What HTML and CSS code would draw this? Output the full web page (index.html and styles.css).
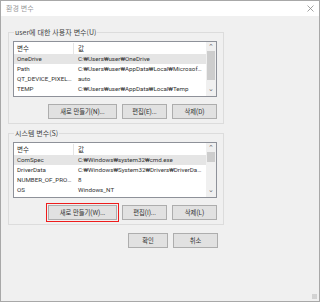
FILE: index.html
```html
<!doctype html>
<html lang="ko">
  <head>
    <meta charset="UTF-8" />
    <title>환경 변수</title>
    <link rel="stylesheet" href="styles.css">
  </head>
  <body>
    <div class="window">
      <div class="titlebar">
        <span class="title">환경 변수</span>
        <svg class="close" width="7" height="7" viewBox="0 0 7 7">
          <path d="M0.5 0.5 L6.5 6.5 M6.5 0.5 L0.5 6.5" stroke="#8a8a8a" stroke-width="0.8" fill="none" />
        </svg>
      </div>
      <div class="content">
        <fieldset class="group">
          <legend>user에 대한 사용자 변수(U)</legend>
          <div class="list">
            <div class="table">
              <div class="row head"><span class="name">변수</span><span class="value">값</span></div>
              <div class="row selected"><span class="name">OneDrive</span><span class="value">C:₩Users₩user₩OneDrive</span></div>
              <div class="row"><span class="name">Path</span><span class="value">C:₩Users₩user₩AppData₩Local₩Microsoft₩WindowsApps;</span></div>
              <div class="row"><span class="name">QT_DEVICE_PIXEL_RATIO</span><span class="value">auto</span></div>
              <div class="row"><span class="name">TEMP</span><span class="value">C:₩Users₩user₩AppData₩Local₩Temp</span></div>
              <div class="row"><span class="name">TMP</span><span class="value">C:₩Users₩user₩AppData₩Local₩Temp</span></div>
            </div>
            <div class="scrollbar">
              <span class="arrow">&#8963;</span>
              <span class="track"><span class="thumb long"></span></span>
              <span class="arrow down">&#8964;</span>
            </div>
          </div>
          <div class="buttons">
            <button class="wide">새로 만들기(N)...</button>
            <button>편집(E)...</button>
            <button>삭제(D)</button>
          </div>
        </fieldset>

        <fieldset class="group">
          <legend>시스템 변수(S)</legend>
          <div class="list">
            <div class="table">
              <div class="row head"><span class="name">변수</span><span class="value">값</span></div>
              <div class="row selected"><span class="name">ComSpec</span><span class="value">C:₩Windows₩system32₩cmd.exe</span></div>
              <div class="row"><span class="name">DriverData</span><span class="value">C:₩Windows₩System32₩Drivers₩DriverData</span></div>
              <div class="row"><span class="name">NUMBER_OF_PROCESSORS</span><span class="value">8</span></div>
              <div class="row"><span class="name">OS</span><span class="value">Windows_NT</span></div>
              <div class="row"><span class="name">Path</span><span class="value">C:₩Windows₩system32;C:₩Windows</span></div>
            </div>
            <div class="scrollbar">
              <span class="arrow">&#8963;</span>
              <span class="track"><span class="thumb"></span></span>
              <span class="arrow down">&#8964;</span>
            </div>
          </div>
          <div class="buttons">
            <button class="wide marked">새로 만들기(W)...</button>
            <button>편집(I)...</button>
            <button>삭제(L)</button>
          </div>
        </fieldset>

        <div class="footer">
          <button class="ok">확인</button>
          <button>취소</button>
        </div>
      </div>
      <span class="grip"></span>
    </div>
  </body>
</html>
```

FILE: styles.css
```css
* {
  box-sizing: border-box;
}

body {
  margin: 0;
  background: #ffffff;
  font-family: Roboto, "Noto Sans CJK KR", sans-serif;
  font-size: 6.2px;
  color: #333333;
}

.window {
  position: relative;
  width: 320px;
  height: 302px;
  border: 1px solid #a8a8a8;
  background: #f0f0f0;
  display: flex;
  flex-direction: column;
}

.titlebar {
  height: 15px;
  background: #ffffff;
  display: flex;
  align-items: center;
  justify-content: space-between;
  padding: 0 5px 0 5px;
}

.title {
  font-family: "Noto Sans CJK KR", sans-serif;
  font-size: 7px;
  color: #9a9a9a;
  margin-top: -1px;
}

.close {
  margin-top: -1px;
}

.content {
  width: 216px;
  margin-left: 7px;
  display: flex;
  flex-direction: column;
}

.group {
  margin: 11px 0 0 0;
  padding: 4px 6px 4px 4px;
  border: 1px solid #dcdcdc;
  min-width: 0;
}

.group + .group {
  margin-top: 4px;
}

legend {
  padding: 0 1px;
  margin-left: 1px;
  font-family: "Noto Sans CJK KR", sans-serif;
  font-size: 7px;
  line-height: 10px;
  color: #444444;
}

.list {
  height: 56px;
  border: 1px solid #8e9199;
  background: #ffffff;
  display: flex;
  overflow: hidden;
}

.table {
  flex: 1;
  min-width: 0;
  padding-top: 1px;
}

.row {
  display: flex;
  height: 10px;
  line-height: 10px;
  white-space: nowrap;
}

.row.head {
  height: 11px;
  line-height: 11px;
  font-family: "Noto Sans CJK KR", sans-serif;
  font-size: 6.5px;
}

.row.selected {
  background: #e5e5e5;
}

.name,
.value {
  overflow: hidden;
  text-overflow: ellipsis;
}

.name {
  width: 60px;
  flex: none;
  padding: 0 2px 0 3px;
}

.value {
  flex: 1;
  padding: 0 4px 0 4px;
}

.head .name {
  border-right: 1px solid #e5e5e5;
}

.scrollbar {
  width: 10px;
  flex: none;
  background: #f0f0f0;
  display: flex;
  flex-direction: column;
  align-items: center;
}

.arrow {
  height: 9px;
  line-height: 11px;
  font-size: 7px;
  color: #6a6a6a;
}

.arrow.down {
  line-height: 5px;
}

.track {
  flex: 1;
  width: 8px;
  display: flex;
  flex-direction: column;
}

.thumb {
  height: 10px;
  background: #cdcdcd;
}

.thumb.long {
  height: 29px;
}

.buttons,
.footer {
  display: flex;
  justify-content: flex-end;
  gap: 5px;
}

.buttons {
  margin-top: 7px;
}

.footer {
  margin-top: 8px;
  padding-right: 6px;
}

button {
  width: 45px;
  height: 15px;
  padding: 0;
  border: 1px solid #adadad;
  background: #e1e1e1;
  font-family: Roboto, "Noto Sans CJK KR", sans-serif;
  font-size: 6.3px;
  color: #333333;
}

button.wide {
  width: 69px;
}

button.ok {
  width: 40px;
}

button.marked {
  outline: 1px solid #ee1c1c;
  outline-offset: 1px;
}

.grip {
  position: absolute;
  right: 2px;
  bottom: 2px;
  width: 5px;
  height: 5px;
  background: radial-gradient(circle, #b0b0b0 0.6px, transparent 0.8px) 0 0 / 2px 2px;
}
```
